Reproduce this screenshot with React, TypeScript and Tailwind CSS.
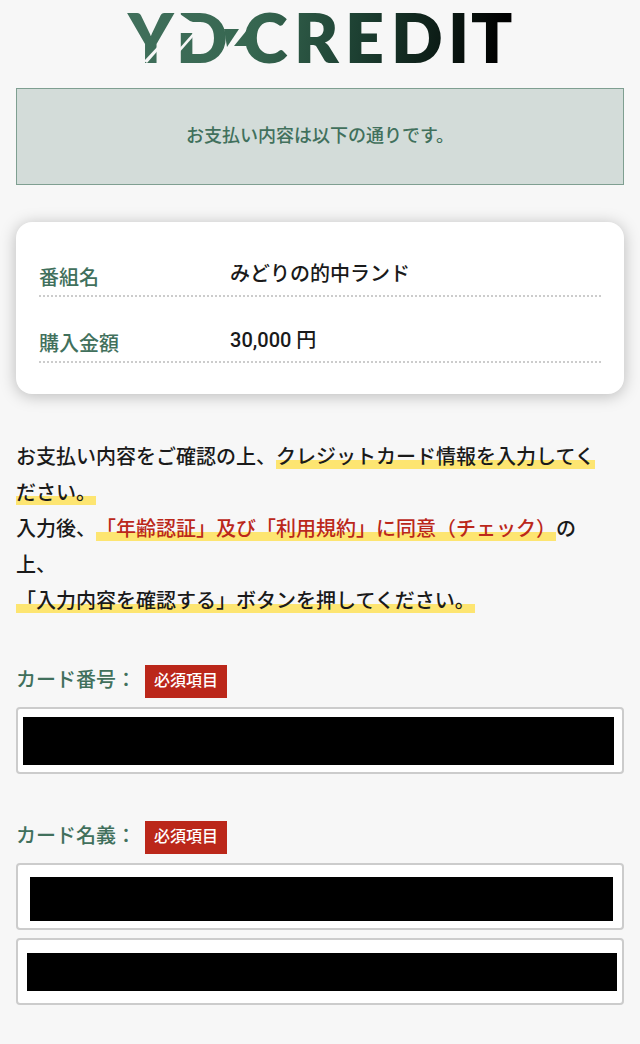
import React from 'react';

interface DetailRow {
  label: string;
  value: string;
}

interface FieldProps {
  id: string;
  label: string;
  children: React.ReactNode;
}

interface MaskedInputProps {
  id?: string;
  name: string;
  ariaLabel?: string;
  maskClass: string;
}

const details: DetailRow[] = [
  { label: '番組名', value: 'みどりの的中ランド' },
  { label: '購入金額', value: '30,000 円' },
];

const Logo = () => (
  <svg viewBox="127 0 388 88" className="block w-full max-w-[388px] overflow-visible" role="img" aria-label="YD-CREDIT">
    <defs>
      <linearGradient id="brand" gradientUnits="userSpaceOnUse" x1="128" y1="0" x2="500" y2="60">
        <stop offset="0" stopColor="#41705c" />
        <stop offset="0.35" stopColor="#366650" />
        <stop offset="0.62" stopColor="#1d4032" />
        <stop offset="1" stopColor="#000000" />
      </linearGradient>
    </defs>
    <text
      x="129 177 244 295 346 392 449 472"
      y="63"
      fill="url(#brand)"
      className="font-['Lato',sans-serif] text-[68px] font-extrabold"
    >
      YDCREDIT
    </text>
    {/* cuts through the Y and D stems */}
    <path d="M145 61 L160 45 L162 47 L148 63 Z" fill="#f7f7f7" />
    <path d="M178 12 L191 21 L194 22 V33 H178 Z" fill="#f7f7f7" />
    <path d="M179 50 L194 33 V37 L179 54 Z" fill="#f7f7f7" />
    {/* bolt joining D and C */}
    <path d="M225 29 H240 L228 47 Z" fill="url(#brand)" />
    <path d="M235 46 L248 30 L250 46 Z" fill="url(#brand)" />
  </svg>
);

const Highlight = ({ className = '', children }: { className?: string; children: React.ReactNode }) => (
  <span className={`bg-[linear-gradient(transparent_64%,#fde571_64%,#fde571_98%,transparent_98%)] ${className}`}>
    {children}
  </span>
);

const Field = ({ id, label, children }: FieldProps) => (
  <div>
    <div className="mb-[9px] flex items-center gap-[9px]">
      <label htmlFor={id} className="pb-1 leading-7 text-[#41705c]">{label}：</label>
      <span className="bg-[#bb271a] px-[9px] pt-1 pb-[5px] text-base leading-6 text-white">必須項目</span>
    </div>
    <div className="space-y-2">{children}</div>
  </div>
);

const MaskedInput = ({ id, name, ariaLabel, maskClass }: MaskedInputProps) => (
  <div className="relative">
    <input
      id={id}
      name={name}
      type="text"
      aria-label={ariaLabel}
      autoComplete="off"
      className="block h-[67px] w-full rounded border-2 border-[#cccccc] bg-white px-3"
    />
    <div className={`pointer-events-none absolute bg-black ${maskClass}`}></div>
  </div>
);

const App: React.FC = () => {
  return (
    <div className="min-h-screen bg-[#f7f7f7] px-4 pb-[38px] font-['Roboto','Noto_Sans_CJK_JP',sans-serif] text-xl font-medium text-[#1a1a1a] [text-spacing-trim:space-all]">
      <header className="flex justify-center">
        <Logo />
      </header>

      <main>
        <p className="border border-[#7f9f91] bg-[#d3dcd9] pt-[33px] pb-[34px] text-center text-lg leading-7 text-[#41705c]">
          お支払い内容は以下の通りです。
        </p>

        <dl className="mt-[37px] rounded-2xl bg-white px-[23px] pt-[9px] pb-[31px] shadow-[0_2px_16px_rgba(0,0,0,0.25)]">
          {details.map(row => (
            <div key={row.label} className="flex h-[66px] items-end border-b-2 border-dotted border-[#cccccc] pb-[3px]">
              <dt className="w-[34%] leading-7 text-[#41705c]">{row.label}</dt>
              <dd className="pb-1 leading-7">{row.value}</dd>
            </div>
          ))}
        </dl>

        <p className="mt-[45px] pr-3 leading-9">
          お支払い内容をご確認の上、<Highlight>クレジットカード情報を入力してください。</Highlight>
          <br />
          入力後、<Highlight className="text-[#bb271a]">「年齢認証」及び「利用規約」に同意（チェック）</Highlight>の上、
          <br />
          <Highlight>「入力内容を確認する」ボタンを押してください。</Highlight>
        </p>

        <form className="mt-[46px] space-y-[47px]">
          <Field id="card-number" label="カード番号">
            <MaskedInput id="card-number" name="cardNumber" maskClass="top-[10px] right-[10px] bottom-[9px] left-[7px]" />
          </Field>
          <Field id="card-first-name" label="カード名義">
            <MaskedInput id="card-first-name" name="firstName" maskClass="top-[14px] right-[11px] bottom-[9px] left-[14px]" />
            <MaskedInput name="lastName" ariaLabel="カード名義（姓）" maskClass="top-[15px] right-[7px] bottom-[14px] left-[11px]" />
          </Field>
        </form>
      </main>
    </div>
  );
};

export default App;
